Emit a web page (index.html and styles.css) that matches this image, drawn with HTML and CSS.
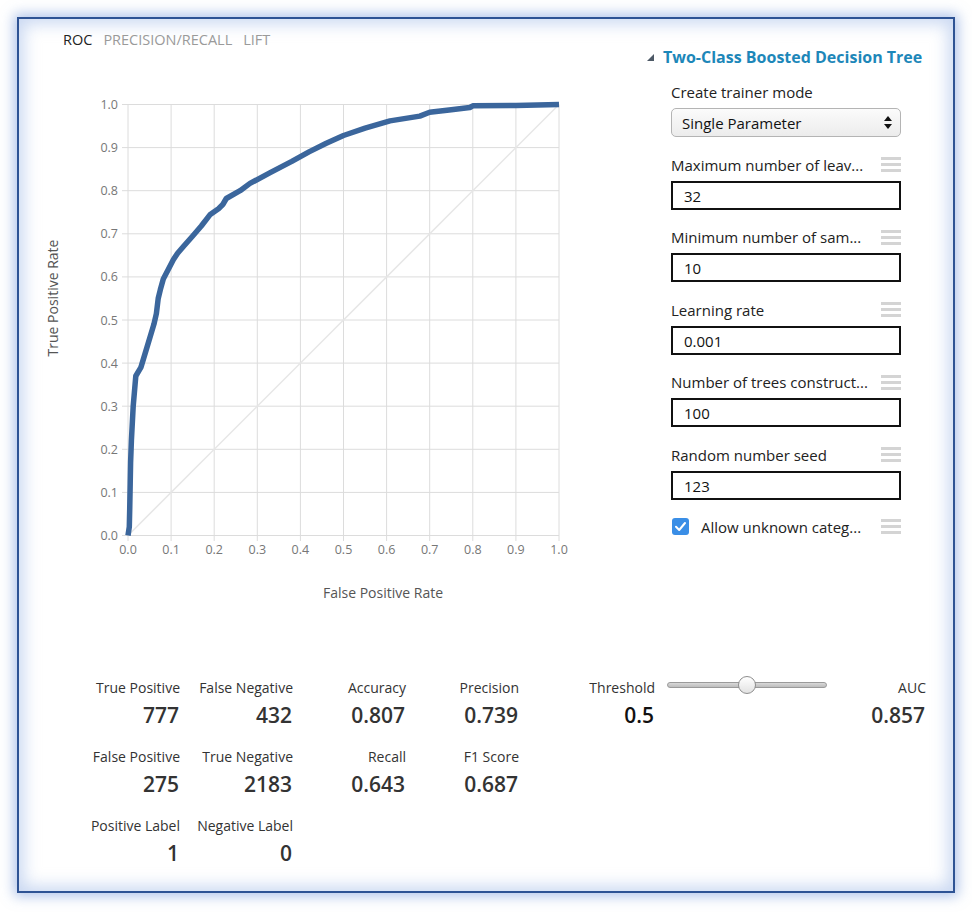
FILE: index.html
```html
<!DOCTYPE html>
<html>
<head>
<meta charset="utf-8">
<title>ROC</title>
<link rel="stylesheet" href="styles.css">
</head>
<body>
<div class="frame">
  <div class="top">
    <div class="chart-col">
      <div class="tabs">
        <span class="tab active">ROC</span>
        <span class="tab">PRECISION/RECALL</span>
        <span class="tab">LIFT</span>
      </div>
      <svg class="chart" width="605" height="594" viewBox="19 56 605 594" xmlns="http://www.w3.org/2000/svg">
        <g class="grid" stroke="#dcdcdc" stroke-width="1">
          <line x1="128" y1="104.5" x2="128" y2="541"/>
          <line x1="171.1" y1="104.5" x2="171.1" y2="541"/>
          <line x1="214.2" y1="104.5" x2="214.2" y2="541"/>
          <line x1="257.3" y1="104.5" x2="257.3" y2="541"/>
          <line x1="300.4" y1="104.5" x2="300.4" y2="541"/>
          <line x1="343.5" y1="104.5" x2="343.5" y2="541"/>
          <line x1="386.6" y1="104.5" x2="386.6" y2="541"/>
          <line x1="429.7" y1="104.5" x2="429.7" y2="541"/>
          <line x1="472.8" y1="104.5" x2="472.8" y2="541"/>
          <line x1="515.9" y1="104.5" x2="515.9" y2="541"/>
          <line x1="559" y1="104.5" x2="559" y2="541"/>
          <line x1="122" y1="535.5" x2="559" y2="535.5"/>
          <line x1="122" y1="492.4" x2="559" y2="492.4"/>
          <line x1="122" y1="449.3" x2="559" y2="449.3"/>
          <line x1="122" y1="406.2" x2="559" y2="406.2"/>
          <line x1="122" y1="363.1" x2="559" y2="363.1"/>
          <line x1="122" y1="320" x2="559" y2="320"/>
          <line x1="122" y1="276.9" x2="559" y2="276.9"/>
          <line x1="122" y1="233.8" x2="559" y2="233.8"/>
          <line x1="122" y1="190.7" x2="559" y2="190.7"/>
          <line x1="122" y1="147.6" x2="559" y2="147.6"/>
          <line x1="122" y1="104.5" x2="559" y2="104.5"/>
        </g>
        <line x1="128" y1="535.5" x2="559" y2="104.5" stroke="#e6e6e6" stroke-width="1.5"/>
        <g class="ylabels" text-anchor="end">
          <text x="118" y="540">0.0</text>
          <text x="118" y="497">0.1</text>
          <text x="118" y="454">0.2</text>
          <text x="118" y="411">0.3</text>
          <text x="118" y="368">0.4</text>
          <text x="118" y="325">0.5</text>
          <text x="118" y="281">0.6</text>
          <text x="118" y="238">0.7</text>
          <text x="118" y="195">0.8</text>
          <text x="118" y="152">0.9</text>
          <text x="118" y="109">1.0</text>
        </g>
        <g class="xlabels" text-anchor="middle">
          <text x="128" y="554">0.0</text>
          <text x="171.1" y="554">0.1</text>
          <text x="214.2" y="554">0.2</text>
          <text x="257.3" y="554">0.3</text>
          <text x="300.4" y="554">0.4</text>
          <text x="343.5" y="554">0.5</text>
          <text x="386.6" y="554">0.6</text>
          <text x="429.7" y="554">0.7</text>
          <text x="472.8" y="554">0.8</text>
          <text x="515.9" y="554">0.9</text>
          <text x="559" y="554">1.0</text>
        </g>
        <text class="axis-title" x="383" y="598" text-anchor="middle">False Positive Rate</text>
        <text class="axis-title" x="0" y="0" text-anchor="middle" transform="translate(58 298) rotate(-90)">True Positive Rate</text>
        <polyline fill="none" stroke="#3b669c" stroke-width="5.5" stroke-linejoin="round" stroke-linecap="butt"
          points="128,535.5 129.3,526.9 129.7,509.6 130.2,483.8 130.6,462.2 131.4,440.7 133.2,406.2 135.8,376 140.9,367.4 147.4,345.9 153.9,324.3 156.4,313.5 158.2,298.5 160.3,289.8 163.3,279.1 168.9,268.3 173.3,259.7 177.6,253.2 183.2,246.7 192.7,236 201.3,226 209.9,214.8 218.5,208.8 222.8,204.5 226.3,198.5 240.1,190.7 250,183.4 270.2,172.6 291.8,161.4 309,151.9 326.3,143.3 343.5,135.5 365.1,128.2 390,120.9 419.8,116.1 429.7,112.3 451.3,109.7 469.8,107.5 472.8,105.8 515.9,105.4 559,104.5"/>
      </svg>
    </div>
    <div class="params">
      <div class="params-head">
        <svg class="caret" width="7" height="7" viewBox="0 0 7 7"><polygon points="0,7 7,7 7,0" fill="#4d5966"/></svg>
        <span class="params-title">Two-Class Boosted Decision Tree</span>
      </div>
      <div class="field">
        <div class="label-row"><span class="label">Create trainer mode</span></div>
        <div class="select">
          <span>Single Parameter</span>
          <svg width="8" height="13" viewBox="0 0 8 13"><polygon points="4,0 8,5 0,5" fill="#111"/><polygon points="0,8 8,8 4,13" fill="#111"/></svg>
        </div>
      </div>
      <div class="field">
        <div class="label-row"><span class="label">Maximum number of leav...</span><span class="grip"><i></i><i></i><i></i></span></div>
        <div class="input">32</div>
      </div>
      <div class="field">
        <div class="label-row"><span class="label">Minimum number of sam...</span><span class="grip"><i></i><i></i><i></i></span></div>
        <div class="input">10</div>
      </div>
      <div class="field">
        <div class="label-row"><span class="label">Learning rate</span><span class="grip"><i></i><i></i><i></i></span></div>
        <div class="input">0.001</div>
      </div>
      <div class="field">
        <div class="label-row"><span class="label">Number of trees construct...</span><span class="grip"><i></i><i></i><i></i></span></div>
        <div class="input">100</div>
      </div>
      <div class="field">
        <div class="label-row"><span class="label">Random number seed</span><span class="grip"><i></i><i></i><i></i></span></div>
        <div class="input">123</div>
      </div>
      <div class="check-row">
        <span class="checkbox"><svg width="17" height="17" viewBox="0 0 17 17"><polyline points="4,8.8 7.2,12 13,5" fill="none" stroke="#fff" stroke-width="2" stroke-linecap="round" stroke-linejoin="round"/></svg></span>
        <span class="label">Allow unknown categ...</span>
        <span class="grip"><i></i><i></i><i></i></span>
      </div>
    </div>
  </div>
  <div class="stats">
    <div class="stat-grid">
      <div class="stat"><div class="s-label">True Positive</div><div class="s-value">777</div></div>
      <div class="stat"><div class="s-label">False Negative</div><div class="s-value">432</div></div>
      <div class="stat"><div class="s-label">Accuracy</div><div class="s-value">0.807</div></div>
      <div class="stat"><div class="s-label">Precision</div><div class="s-value">0.739</div></div>
      <div class="stat"><div class="s-label">False Positive</div><div class="s-value">275</div></div>
      <div class="stat"><div class="s-label">True Negative</div><div class="s-value">2183</div></div>
      <div class="stat"><div class="s-label">Recall</div><div class="s-value">0.643</div></div>
      <div class="stat"><div class="s-label">F1 Score</div><div class="s-value">0.687</div></div>
      <div class="stat"><div class="s-label">Positive Label</div><div class="s-value">1</div></div>
      <div class="stat"><div class="s-label">Negative Label</div><div class="s-value">0</div></div>
    </div>
    <div class="stat threshold">
      <div class="s-label">Threshold</div>
      <div class="s-value dark">0.5</div>
    </div>
    <div class="slider">
      <div class="track"></div>
      <div class="thumb"></div>
    </div>
    <div class="stat auc">
      <div class="s-label">AUC</div>
      <div class="s-value">0.857</div>
    </div>
  </div>
</div>
</body>
</html>
```
FILE: styles.css
```css
* { box-sizing: border-box; }
html, body { margin: 0; padding: 0; background: #fff; }
body {
  font-family: "Open Sans", "Noto Sans", "DejaVu Sans", sans-serif;
  color: #333;
  width: 972px;
  height: 912px;
  overflow: hidden;
}
.frame {
  margin: 17px;
  width: 938px;
  height: 876px;
  border: 2px solid #2e5394;
  background: #fff;
  box-shadow: 0 0 12px 3px rgba(110, 145, 215, 0.55), inset 0 0 16px 5px rgba(160, 186, 232, 0.55);
}
.top { display: flex; height: 631px; }
.chart-col { width: 605px; }
.tabs {
  height: 37px;
  padding: 11px 0 0 44px;
  font-size: 14.5px;
  line-height: 20px;
  display: flex;
  gap: 11px;
}
.tab { color: #9a9a9a; }
.tab.active { color: #222; }
.chart { display: block; font-family: "Open Sans", "Noto Sans", sans-serif; }
.ylabels text, .xlabels text { font-size: 12.5px; fill: #777; }
.axis-title { font-size: 14px; fill: #555; }

.params { flex: 1; padding: 28px 0 0 23px; }
.params-head { display: flex; align-items: center; height: 20px; }
.caret { display: block; margin-right: 9px; }
.params-title { font-size: 16px; font-weight: 700; color: #1d87b9; line-height: 20px; white-space: nowrap; }
.field { margin-left: 24px; width: 230px; margin-top: 15px; }
.field + .field { margin-top: 17.5px; }
.label-row { display: flex; justify-content: space-between; align-items: center; height: 20px; }
.label { font-size: 15px; line-height: 20px; color: #222; white-space: nowrap; }
.grip { display: flex; flex-direction: column; gap: 3px; width: 20px; }
.grip i { display: block; height: 3px; background: #d4d4d4; }
.select {
  margin-top: 6px;
  height: 29px;
  border: 1px solid #b4b4b4;
  border-radius: 5px;
  background: linear-gradient(#fbfbfb, #ececec);
  display: flex;
  align-items: center;
  justify-content: space-between;
  padding: 0 8px 0 10px;
  font-size: 15px;
  color: #111;
}
.select svg { display: block; }
.input {
  margin-top: 6px;
  height: 29px;
  border: 2px solid #111;
  padding-left: 11px;
  font-size: 15px;
  line-height: 26px;
  color: #111;
}
.check-row {
  margin: 17px 0 0 25px;
  width: 229px;
  height: 20px;
  display: flex;
  align-items: center;
}
.checkbox {
  width: 17px; height: 17px;
  border-radius: 3px;
  background: #3a8ee6;
  margin-right: 12px;
}
.checkbox svg { display: block; }
.check-row .label { flex: 1; }

.stats { display: flex; padding: 28px 0 0 48px; }
.stat-grid { display: grid; grid-template-columns: repeat(4, 113px); row-gap: 19px; }
.stat { text-align: right; }
.s-label { font-size: 14px; line-height: 20px; color: #333; white-space: nowrap; }
.s-value { font-size: 21px; font-weight: 600; line-height: 26px; margin-top: 4px; color: #333; padding-right: 1px; }
.s-value.dark { color: #111; }
.threshold { width: 80px; margin-left: 56px; }
.slider { position: relative; width: 160px; height: 20px; margin-left: 12px; margin-top: -3px; }
.track {
  position: absolute; left: 0; right: 0; top: 7px; height: 6px;
  border-radius: 3px;
  border: 1px solid #9a9a9a;
  background: linear-gradient(#d8d8d8, #bdbdbd);
}
.thumb {
  position: absolute; left: 71px; top: 1px; width: 18px; height: 18px;
  border-radius: 50%;
  border: 1px solid #8e8e8e;
  background: linear-gradient(#ffffff, #e2e2e2);
}
.auc { width: 99px; }
```
